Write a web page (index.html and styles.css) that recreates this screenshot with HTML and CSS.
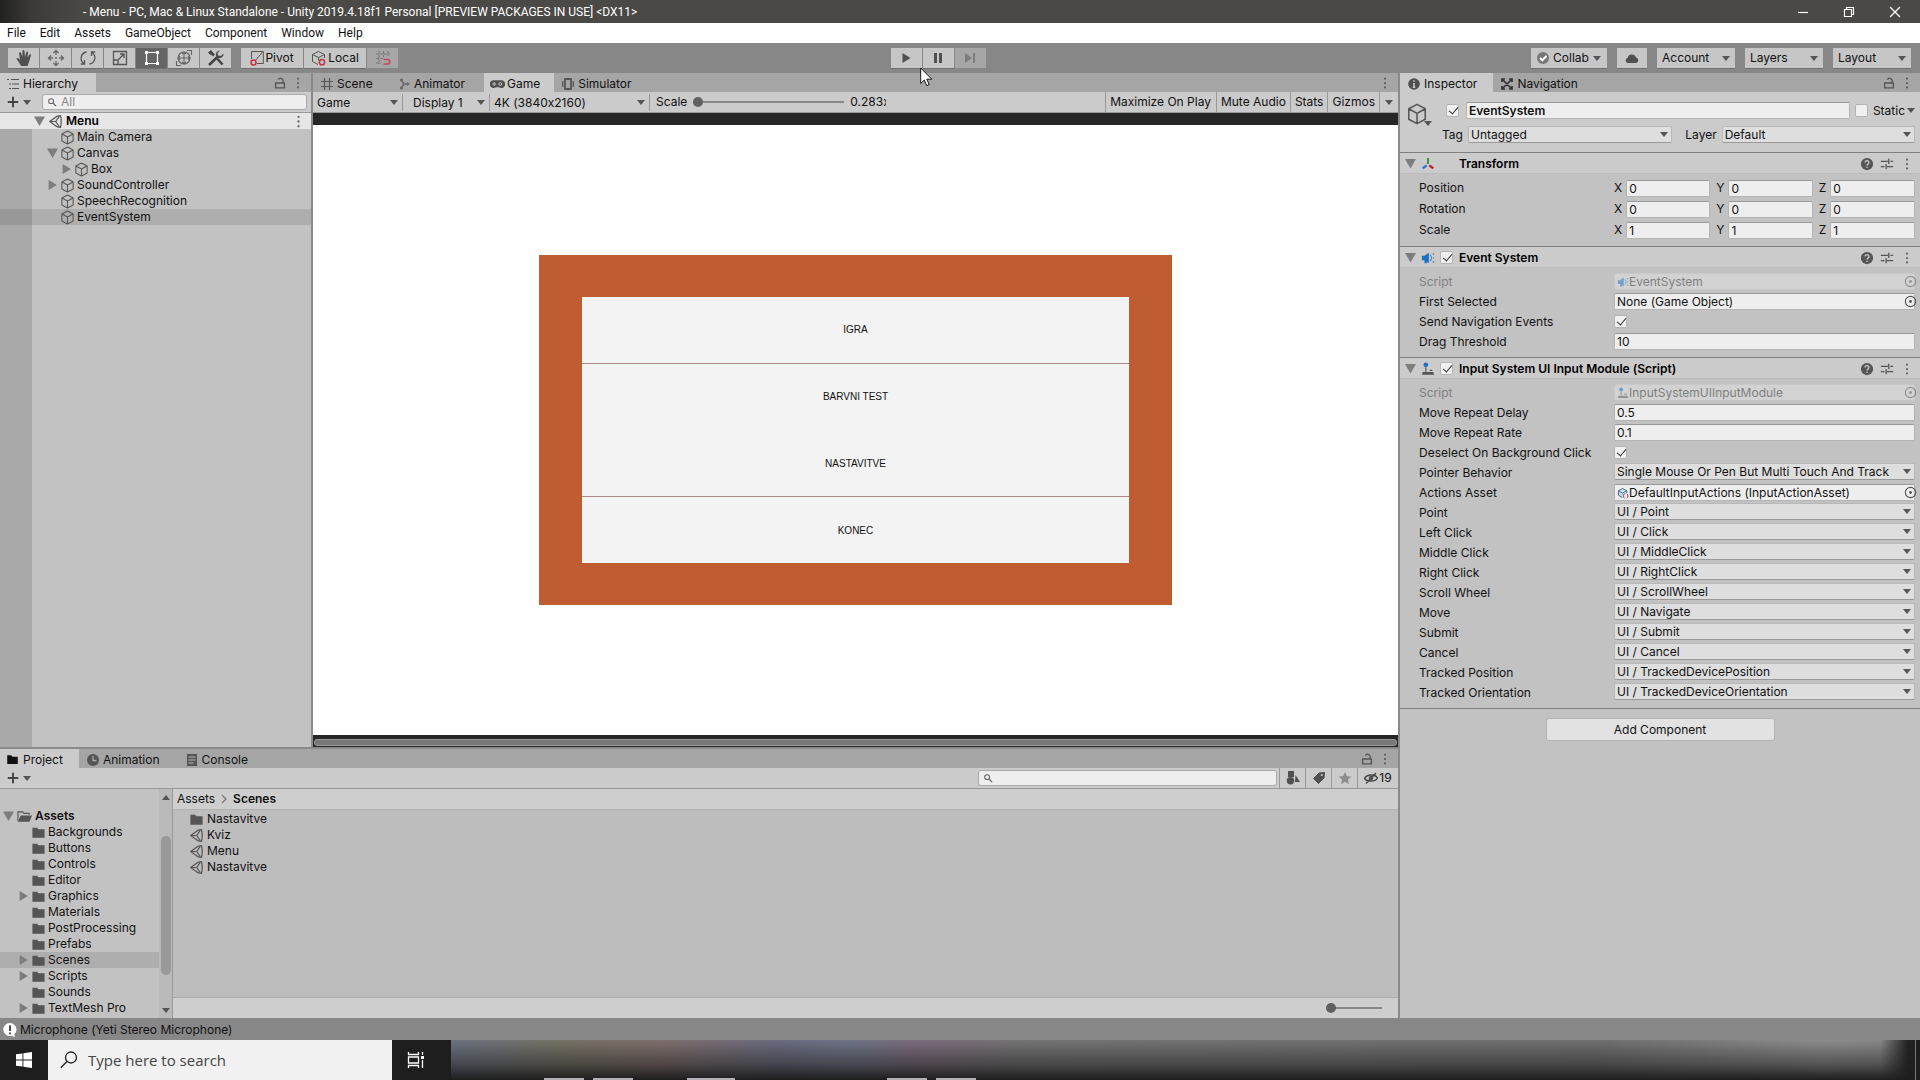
FILE: index.html
```
<!DOCTYPE html>
<html lang="en">
<head>
  <meta charset="UTF-8" />
  <meta name="viewport" content="width=device-width, initial-scale=1.0"/>
  <title>Menu - PC, Mac &amp; Linux Standalone - Unity</title>
  <link rel="stylesheet" href="styles.css">
</head>
<body>

  <!-- Shared icons -->
  <svg class="sprite" width="0" height="0" aria-hidden="true">
    <symbol id="i-cube" viewBox="0 0 16 16"><path d="M8 1l6 3.200v7.600L8 15l-6-3.200V4.200zM2 4.200l6 3.300 6-3.300M8 7.500V15" fill="none" stroke="currentColor" stroke-width="1.1" stroke-linejoin="round"/></symbol>
    <symbol id="i-unity" viewBox="0 0 16 16"><path d="M10 2.2L1.8 8 10 13.8M10 2.2l3.200-.6.8 3.400M10 13.8l3.200.6.8-3.400M14 5v6M1.800 8h6.400M8.200 8L12 2.600M8.200 8l3.800 5.400" fill="none" stroke="currentColor" stroke-width="1.3" stroke-linejoin="round"/></symbol>
    <symbol id="i-folder" viewBox="0 0 16 16"><path d="M1.5 2.8h5l1.400 1.800h6.600v8.900h-13z" fill="currentColor"/></symbol>
    <symbol id="i-open" viewBox="0 0 16 16"><path d="M1 13V3h5l1.300 1.600H13V6" fill="none" stroke="currentColor" stroke-width="1.2"/><path d="M3.800 6.800H16L13.400 13.500H1z" fill="currentColor"/></symbol>
    <symbol id="i-lock" viewBox="0 0 16 16"><path d="M3 8h10v5.500H3zM11.500 8V5a3 3 0 0 0-5.500-1" fill="none" stroke="currentColor" stroke-width="1.5"/></symbol>
    <symbol id="i-dots" viewBox="0 0 16 16"><path d="M7 2h2v2H7zM7 7h2v2H7zM7 12h2v2H7z" fill="currentColor"/></symbol>
    <symbol id="i-search" viewBox="0 0 16 16"><circle cx="6" cy="6" r="3.6" fill="none" stroke="currentColor" stroke-width="1.5"/><path d="M8.700 8.700l4.500 4.500" stroke="currentColor" stroke-width="1.8"/></symbol>
    <symbol id="i-plus" viewBox="0 0 16 16"><path d="M8 2v12M2 8h12" stroke="currentColor" stroke-width="2.2"/></symbol>
    <symbol id="i-help" viewBox="0 0 16 16"><circle cx="8" cy="8" r="7" fill="currentColor"/><path d="M5.800 6.300a2.200 2.200 0 1 1 3.300 1.900c-.8.5-1.100.8-1.100 1.600M8 11v1.700" fill="none" stroke="#cbcbcb" stroke-width="1.5"/></symbol>
    <symbol id="i-preset" viewBox="0 0 16 16"><path d="M1 5h8M12 5h3M10 2v6M1 11h4M8 11h7M7 8v6" fill="none" stroke="currentColor" stroke-width="1.5"/></symbol>
    <symbol id="i-pick" viewBox="0 0 16 16"><circle cx="8" cy="8" r="5.500" fill="none" stroke="currentColor" stroke-width="1.2"/><circle cx="8" cy="8" r="1.500" fill="currentColor"/></symbol>
    <symbol id="i-horn" viewBox="0 0 16 16"><path d="M1 5.500h3L9 2v12l-5-3.500H1z" fill="#1c6fc4"/><path d="M4 10.500h2.500V14H4z" fill="#1c6fc4"/><path d="M10.500 4.500a5 5 0 0 1 0 7" fill="none" stroke="#3a8bd8" stroke-width="1.4"/><path d="M13.500 3.500h1.500M13.500 8h1.500M13.500 12.500h1.500" stroke="#666" stroke-width="1.4"/></symbol>
    <symbol id="i-stick" viewBox="0 0 16 16"><circle cx="5.500" cy="3.200" r="2.700" fill="#1c6fc4"/><path d="M5.500 6v5M10 9.500h3" stroke="#555" stroke-width="1.4"/><path d="M2 11.500h12l1 3H1z" fill="#555"/></symbol>
  </svg>

  <header class="titlebar">
    <div class="title-icon"></div>
    <span class="title-text">- Menu - PC, Mac &amp; Linux Standalone - Unity 2019.4.18f1 Personal [PREVIEW PACKAGES IN USE] &lt;DX11&gt;</span>
    <div class="window-buttons">
      <button aria-label="Minimize"><svg width="12" height="12" viewBox="0 0 12 12"><path d="M1 6.500h10" stroke="#fff" stroke-width="1.2"/></svg></button>
      <button aria-label="Restore"><svg width="12" height="12" viewBox="0 0 12 12"><path d="M1.500 3.500h7v7h-7zM3.500 3.500v-2h7v7h-2" fill="none" stroke="#fff" stroke-width="1.2"/></svg></button>
      <button aria-label="Close"><svg width="12" height="12" viewBox="0 0 12 12"><path d="M1 1l10 10M11 1L1 11" stroke="#fff" stroke-width="1.3"/></svg></button>
    </div>
  </header>

  <nav class="menubar">
    <button>File</button><button>Edit</button><button>Assets</button><button>GameObject</button><button>Component</button><button>Window</button><button>Help</button>
  </nav>

  <div class="toolbar">
    <div class="tools">
      <div class="group">
        <button class="tool" aria-label="Hand"><svg width="18" height="18" viewBox="0 0 18 18"><path d="M6 17C5 14 2 11.500 1.500 9.500c1-1 2.300 0 3.500 1.500L4 4c.8-1 1.800-.8 2.200.2L7.300 8 7.500 2c.5-1.200 1.700-1.200 2 0L10 8l1.300-5c.7-.9 1.700-.6 1.800.4L12.500 8.500 14.500 5.500c.9-.5 1.600 0 1.400 1L14 13l-1.500 4z" fill="#505050"/></svg></button>
        <button class="tool" aria-label="Move"><svg width="18" height="18" viewBox="0 0 18 18"><path d="M9 1.500V6M9 12v4.500M1.500 9H6M12 9h4.500M6.500 4L9 1.500 11.500 4M6.500 14L9 16.500l2.500-2.500M4 6.500L1.500 9 4 11.500M14 6.500L16.500 9 14 11.500" fill="none" stroke="#6a6a6a" stroke-width="1.300"/><circle cx="9" cy="9" r="1" fill="#6a6a6a"/></svg></button>
        <button class="tool" aria-label="Rotate"><svg width="18" height="18" viewBox="0 0 18 18"><path d="M7.500 3A6.300 6.300 0 0 0 5 14.500M1.800 15h3.700v-4M10.500 15A6.300 6.300 0 0 0 13 3.500M16.200 3h-3.700v4" fill="none" stroke="#555" stroke-width="1.300"/></svg></button>
        <button class="tool" aria-label="Scale"><svg width="18" height="18" viewBox="0 0 18 18"><path d="M2.500 2.500h13v13h-13zM2.500 11h4.500v4.500M7.500 10.500L13 5M9 5h4v4" fill="none" stroke="#555" stroke-width="1.300"/></svg></button>
        <button class="tool active" aria-label="Rect"><svg width="18" height="18" viewBox="0 0 18 18"><path d="M5 3.500h8M5 14.500h8M3.500 5v8M14.500 5v8" stroke="#fff" stroke-width="1.200"/><path d="M2 2h3v3H2zM13 2h3v3h-3zM2 13h3v3H2zM13 13h3v3h-3z" fill="#fff"/></svg></button>
        <button class="tool" aria-label="Transform"><svg width="18" height="18" viewBox="0 0 18 18"><circle cx="9" cy="9" r="6" fill="none" stroke="#666" stroke-width="1.100"/><path d="M9 3v12M3 9h12M7 5l2-2 2 2M7 13l2 2 2-2M5 7L3 9l2 2M13 7l2 2-2 2M12 1.500h4.500V6M6 16.500H1.500V12" fill="none" stroke="#666" stroke-width="1.100"/></svg></button>
        <button class="tool" aria-label="Custom tools"><svg width="18" height="18" viewBox="0 0 18 18"><path d="M2 16L11 7.500M3 2.500l4 4M10.500 10l5 5.500" stroke="#444" stroke-width="2.600"/><path d="M16.500 4.500L14 7l-3-.5L10.500 4 13 1.500a4 4 0 0 0-4 5l2.500 2.500a4 4 0 0 0 5-4.500z" fill="#444"/><path d="M1 3.500L4 1l2 3-2.500 2z" fill="#444"/></svg></button>
      </div>
      <div class="group">
        <button class="wide-tool"><svg width="14" height="16" viewBox="0 0 14 16"><path d="M1.500 9V1.500h11.800v12H7M5 11L12.500 2" fill="none" stroke="#555"/><circle cx="3.500" cy="12.500" r="2.500" fill="none" stroke="#c8304a" stroke-width="1.500"/></svg>Pivot</button>
        <button class="wide-tool"><svg width="16" height="16" viewBox="0 0 16 16"><path d="M7 14.500l-5.500-3v-7L7.500 1.500l6 3V8M1.500 4.500l6 3 6-3M7.500 7.500v3" fill="none" stroke="#555"/><circle cx="11" cy="12.200" r="2.600" fill="none" stroke="#c8304a" stroke-width="1.500"/></svg>Local</button>
        <button class="tool snap" aria-label="Grid snapping" disabled><svg width="18" height="18" viewBox="0 0 18 18"><path d="M5 2v13M9.500 2v6M14 2v5M2 5h14M2 9.500h8M2 14h5" stroke="#777" stroke-dasharray="3 1"/><path d="M9.500 10.500h4a2.200 2.200 0 0 1 0 4.500h-4" fill="none" stroke="#c04a5c" stroke-width="1.700"/></svg></button>
      </div>
    </div>
    <div class="group play">
      <button class="tool" aria-label="Play"><svg width="12" height="12" viewBox="0 0 12 12"><path d="M2.500 1l8 5-8 5z" fill="#505050"/></svg></button>
      <button class="tool" aria-label="Pause"><svg width="12" height="12" viewBox="0 0 12 12"><path d="M2 1h3v10H2zM7 1h3v10H7z" fill="#505050"/></svg></button>
      <button class="tool step" aria-label="Step" disabled><svg width="12" height="12" viewBox="0 0 12 12"><path d="M1 1l7 5-7 5zM9 1h2v10H9z" fill="#7c7c7c"/></svg></button>
    </div>
    <div class="services">
      <button class="service"><svg width="12" height="12" viewBox="0 0 12 12"><circle cx="6" cy="6" r="6" fill="#777"/><path d="M3 6l2.300 2.300L9.500 4" fill="none" stroke="#fff" stroke-width="2"/></svg>Collab<i class="arrow"></i></button>
      <button class="service cloud" aria-label="Services"><svg width="14" height="12" viewBox="0 0 14 12"><path d="M3 11a2.700 2.700 0 0 1-.3-5.300A4.300 4.300 0 0 1 11 5.500 2.800 2.800 0 0 1 11 11z" fill="#505050"/></svg></button>
      <button class="service menu">Account<i class="arrow"></i></button>
      <button class="service menu">Layers<i class="arrow"></i></button>
      <button class="service menu">Layout<i class="arrow"></i></button>
    </div>
  </div>

  <main class="editor">
    <div class="left">
      <div class="upper">

        <!-- Hierarchy -->
        <section class="panel hierarchy">
          <div class="tabs">
            <button class="tab on"><svg width="12" height="12" viewBox="0 0 12 12"><path d="M0 1.500h2M4 1.500h8M2 6h2M5 6h7M2 10.500h2M5 10.500h7" stroke="#555" stroke-width="1.200"/></svg>Hierarchy</button>
            <span class="tab-tools"><button class="icon" aria-label="Lock"><svg><use href="#i-lock"/></svg></button><button class="icon" aria-label="More"><svg><use href="#i-dots"/></svg></button></span>
          </div>
          <div class="bar">
            <button class="add" aria-label="Create"><svg><use href="#i-plus"/></svg><i class="arrow"></i></button>
            <label class="search"><svg><use href="#i-search"/></svg><input type="text" placeholder="All" aria-label="Search hierarchy"></label>
          </div>
          <ul class="tree objects">
            <li class="scene"><i class="fold open"></i><svg><use href="#i-unity"/></svg>Menu<button class="icon" aria-label="Scene menu"><svg><use href="#i-dots"/></svg></button></li>
            <li><i class="fold none"></i><svg><use href="#i-cube"/></svg>Main Camera</li>
            <li><i class="fold open"></i><svg><use href="#i-cube"/></svg>Canvas</li>
            <li class="child"><i class="fold"></i><svg><use href="#i-cube"/></svg>Box</li>
            <li><i class="fold"></i><svg><use href="#i-cube"/></svg>SoundController</li>
            <li><i class="fold none"></i><svg><use href="#i-cube"/></svg>SpeechRecognition</li>
            <li class="selected"><i class="fold none"></i><svg><use href="#i-cube"/></svg>EventSystem</li>
          </ul>
        </section>

        <!-- Game view -->
        <section class="panel game">
          <div class="tabs">
            <button class="tab scene-tab"><svg width="12" height="12" viewBox="0 0 12 12"><path d="M3.500 0v12M8.500 0v12M0 3.500h12M0 8.500h12" stroke="#555" stroke-width="1.200"/></svg>Scene</button>
            <button class="tab animator-tab"><svg width="10" height="12" viewBox="0 0 10 12"><path d="M1 1.500l3 4.500-3 4.500M4 6h5" fill="none" stroke="#666" stroke-width="1.400"/><circle cx="1.500" cy="2" r="1.500" fill="#666"/><circle cx="1.500" cy="10" r="1.500" fill="#666"/><path d="M7 4l3 2-3 2z" fill="#666"/></svg>Animator</button>
            <button class="tab game-tab on"><svg width="15" height="12" viewBox="0 0 16 12"><path d="M4.500 2h7a4.200 4.200 0 1 1-2 7.500h-3A4.200 4.200 0 1 1 4.500 2z" fill="#505050"/><path d="M4.500 4v4M2.500 6h4" stroke="#cbcbcb"/><circle cx="11" cy="6" r="1.500" fill="none" stroke="#cbcbcb"/></svg>Game</button>
            <button class="tab"><svg width="12" height="12" viewBox="0 0 12 12"><path d="M3 1h6v10H3z" fill="none" stroke="#555" stroke-width="1.800"/><path d="M.7 3v6M11.300 3v6" stroke="#555" stroke-width="1.300"/></svg>Simulator</button>
            <span class="tab-tools"><button class="icon" aria-label="More"><svg><use href="#i-dots"/></svg></button></span>
          </div>
          <div class="bar view-bar">
            <span class="select flat target"><select aria-label="View"><option>Game</option></select></span>
            <span class="select flat display"><select aria-label="Display"><option>Display 1</option></select></span>
            <span class="select flat resolution"><select aria-label="Resolution"><option>4K (3840x2160)</option></select></span>
            <label for="scale">Scale</label>
            <input class="slider" id="scale" type="range" min="0" max="100" value="0">
            <span class="scale-value">0.283x</span>
            <button class="toggle first">Maximize On Play</button>
            <button class="toggle">Mute Audio</button>
            <button class="toggle">Stats</button>
            <button class="toggle">Gizmos</button>
            <button class="toggle more" aria-label="Gizmo options"><i class="arrow"></i></button>
          </div>
          <div class="stage">
            <div class="canvas">
              <div class="box">
                <button>IGRA</button>
                <button>BARVNI TEST</button>
                <button>NASTAVITVE</button>
                <button>KONEC</button>
              </div>
            </div>
            <div class="hscroll"></div>
          </div>
        </section>
      </div>

      <!-- Project -->
      <section class="panel project">
        <div class="tabs">
          <button class="tab on"><svg width="13" height="13"><use href="#i-folder"/></svg>Project</button>
          <button class="tab"><svg width="12" height="12" viewBox="0 0 12 12"><circle cx="6" cy="6" r="6" fill="#555"/><path d="M6 2v4.500h3.500" fill="none" stroke="#aaa" stroke-width="1.300"/></svg>Animation</button>
          <button class="tab"><svg width="12" height="12" viewBox="0 0 12 12"><path d="M1 0h10v12H1z" fill="#555"/><path d="M2.500 3h7M2.500 6h7M2.500 9h5" stroke="#bbb"/></svg>Console</button>
          <span class="tab-tools"><button class="icon" aria-label="Lock"><svg><use href="#i-lock"/></svg></button><button class="icon" aria-label="More"><svg><use href="#i-dots"/></svg></button></span>
        </div>
        <div class="bar project-bar">
          <button class="add" aria-label="Create"><svg><use href="#i-plus"/></svg><i class="arrow"></i></button>
          <label class="search"><svg><use href="#i-search"/></svg><input type="text" aria-label="Search project"></label>
          <button class="filter" aria-label="Search by type"><svg width="14" height="14" viewBox="0 0 14 14"><path d="M2 0h6v6H2zM9.500 4l4.500 7H9z" fill="#505050"/><circle cx="4.500" cy="9.800" r="3.700" fill="#505050"/></svg></button>
          <button class="filter" aria-label="Search by label"><svg width="14" height="14" viewBox="0 0 14 14"><path d="M1.500 7.500L7 2l5.500-.5L12 7l-5.500 5.500z" fill="#505050" stroke="#505050" stroke-linejoin="round"/><circle cx="9.800" cy="4" r="1.100" fill="#cbcbcb"/></svg></button>
          <button class="filter" aria-label="Save search"><svg width="14" height="14" viewBox="0 0 14 14"><path d="M7 1l1.800 4.200 4.500.4-3.400 3 1 4.400L7 10.700 3.100 13l1-4.400-3.400-3 4.500-.4z" fill="#8c8c8c"/></svg></button>
          <button class="filter hidden-count"><svg width="14" height="14" viewBox="0 0 14 14"><path d="M.5 7.500C3 3 11 3 13.500 7 11 11 3 11 .5 7.500zM2 12.500L12 2" fill="none" stroke="#444" stroke-width="1.400"/><circle cx="7" cy="7" r="2.300" fill="#505050"/></svg>19</button>
        </div>
        <div class="browser">
          <div class="folders">
            <ul class="tree">
              <li class="root"><i class="fold open"></i><svg><use href="#i-open"/></svg>Assets</li>
              <li><i class="fold none"></i><svg><use href="#i-folder"/></svg>Backgrounds</li>
              <li><i class="fold none"></i><svg><use href="#i-folder"/></svg>Buttons</li>
              <li><i class="fold none"></i><svg><use href="#i-folder"/></svg>Controls</li>
              <li><i class="fold none"></i><svg><use href="#i-folder"/></svg>Editor</li>
              <li><i class="fold"></i><svg><use href="#i-folder"/></svg>Graphics</li>
              <li><i class="fold none"></i><svg><use href="#i-folder"/></svg>Materials</li>
              <li><i class="fold none"></i><svg><use href="#i-folder"/></svg>PostProcessing</li>
              <li><i class="fold none"></i><svg><use href="#i-folder"/></svg>Prefabs</li>
              <li class="selected"><i class="fold"></i><svg><use href="#i-folder"/></svg>Scenes</li>
              <li><i class="fold"></i><svg><use href="#i-folder"/></svg>Scripts</li>
              <li><i class="fold none"></i><svg><use href="#i-folder"/></svg>Sounds</li>
              <li><i class="fold"></i><svg><use href="#i-folder"/></svg>TextMesh Pro</li>
            </ul>
            <div class="vscroll"><i class="arrow up"></i><div class="thumb"></div><i class="arrow"></i></div>
          </div>
          <div class="files">
            <div class="crumbs"><a href="#">Assets</a><svg width="6" height="10" viewBox="0 0 6 10"><path d="M1 1l4 4-4 4" fill="none" stroke="#777" stroke-width="1.300"/></svg><b>Scenes</b></div>
            <ul class="tree">
              <li><svg><use href="#i-folder"/></svg>Nastavitve</li>
              <li><svg><use href="#i-unity"/></svg>Kviz</li>
              <li><svg><use href="#i-unity"/></svg>Menu</li>
              <li><svg><use href="#i-unity"/></svg>Nastavitve</li>
            </ul>
            <div class="files-foot"><input class="slider" type="range" min="0" max="100" value="0" aria-label="Icon size"></div>
          </div>
        </div>
      </section>
    </div>

    <!-- Inspector -->
    <section class="panel inspector">
      <div class="tabs">
        <button class="tab on"><svg width="12" height="12" viewBox="0 0 12 12"><circle cx="6" cy="6" r="5.800" fill="#505050"/><path d="M6 2.200v1.600M6 5v4.500M4.800 9.300h2.400" stroke="#cbcbcb" stroke-width="1.500"/></svg>Inspector</button>
        <button class="tab"><svg width="12" height="12" viewBox="0 0 12 12"><path d="M1 1l10 10M11 1L1 11M1 4V1h3M8 1h3v3M11 8v3H8M4 11H1V8" fill="none" stroke="#333" stroke-width="1.700"/></svg>Navigation</button>
        <span class="tab-tools"><button class="icon" aria-label="Lock"><svg><use href="#i-lock"/></svg></button><button class="icon" aria-label="More"><svg><use href="#i-dots"/></svg></button></span>
      </div>

      <div class="object-head">
        <button class="object-icon" aria-label="Object icon"><svg><use href="#i-cube"/></svg><i class="arrow"></i></button>
        <div class="object-rows">
          <div class="object-row">
            <input type="checkbox" checked aria-label="Active">
            <input class="text name" type="text" value="EventSystem" aria-label="Name">
            <input id="static" type="checkbox"><label for="static">Static</label><i class="arrow"></i>
          </div>
          <div class="object-row tags">
            <label for="tag">Tag</label><span class="select tag"><select id="tag"><option>Untagged</option></select></span>
            <label for="layer">Layer</label><span class="select layer"><select id="layer"><option>Default</option></select></span>
          </div>
        </div>
      </div>

      <section class="component">
        <h2><i class="fold open"></i><svg class="kind" viewBox="0 0 16 16"><path d="M8 1v7" stroke="#3b8f3b" stroke-width="2.200"/><path d="M6.500 9.500L2 13" stroke="#2a6fc9" stroke-width="2.600"/><path d="M9.500 9.500L14 13" stroke="#b3202c" stroke-width="2.600"/></svg><span class="no-check"></span>Transform<span class="head-tools"><svg><use href="#i-help"/></svg><svg><use href="#i-preset"/></svg><svg><use href="#i-dots"/></svg></span></h2>
        <div class="row vector"><span class="label">Position</span>
          <div class="axes"><label>X<input class="text" type="text" value="0"></label><label>Y<input class="text" type="text" value="0"></label><label>Z<input class="text" type="text" value="0"></label></div></div>
        <div class="row vector"><span class="label">Rotation</span>
          <div class="axes"><label>X<input class="text" type="text" value="0"></label><label>Y<input class="text" type="text" value="0"></label><label>Z<input class="text" type="text" value="0"></label></div></div>
        <div class="row vector"><span class="label">Scale</span>
          <div class="axes"><label>X<input class="text" type="text" value="1"></label><label>Y<input class="text" type="text" value="1"></label><label>Z<input class="text" type="text" value="1"></label></div></div>
      </section>

      <section class="component">
        <h2><i class="fold open"></i><svg class="kind"><use href="#i-horn"/></svg><input type="checkbox" checked aria-label="Enable Event System">Event System<span class="head-tools"><svg><use href="#i-help"/></svg><svg><use href="#i-preset"/></svg><svg><use href="#i-dots"/></svg></span></h2>
        <div class="row off"><label class="label" for="es-script">Script</label><div class="object-field"><svg><use href="#i-horn"/></svg><input id="es-script" type="text" value="EventSystem" disabled><svg class="pick"><use href="#i-pick"/></svg></div></div>
        <div class="row"><label class="label" for="first">First Selected</label><div class="object-field"><input id="first" type="text" value="None (Game Object)"><svg class="pick"><use href="#i-pick"/></svg></div></div>
        <div class="row"><label class="label" for="send">Send Navigation Events</label><input id="send" type="checkbox" checked></div>
        <div class="row"><label class="label" for="drag">Drag Threshold</label><input class="text" id="drag" type="text" value="10"></div>
      </section>

      <section class="component">
        <h2><i class="fold open"></i><svg class="kind"><use href="#i-stick"/></svg><input type="checkbox" checked aria-label="Enable Input System UI Input Module">Input System UI Input Module (Script)<span class="head-tools"><svg><use href="#i-help"/></svg><svg><use href="#i-preset"/></svg><svg><use href="#i-dots"/></svg></span></h2>
        <div class="row off"><label class="label" for="is-script">Script</label><div class="object-field"><svg><use href="#i-stick"/></svg><input id="is-script" type="text" value="InputSystemUIInputModule" disabled><svg class="pick"><use href="#i-pick"/></svg></div></div>
        <div class="row"><label class="label" for="delay">Move Repeat Delay</label><input class="text" id="delay" type="text" value="0.5"></div>
        <div class="row"><label class="label" for="rate">Move Repeat Rate</label><input class="text" id="rate" type="text" value="0.1"></div>
        <div class="row"><label class="label" for="deselect">Deselect On Background Click</label><input id="deselect" type="checkbox" checked></div>
        <div class="row"><label class="label" for="pointer">Pointer Behavior</label><span class="select"><select id="pointer"><option>Single Mouse Or Pen But Multi Touch And Track</option></select></span></div>
        <div class="row"><label class="label" for="actions">Actions Asset</label><div class="object-field"><svg viewBox="0 0 16 16"><path d="M7 14l-5-3V5l5.500-3L13 5v3M2 5l5.500 3L13 5" fill="#c6d8ea" stroke="#3a6ea8" stroke-width="1.300"/><path d="M10 9c-1.500 0-.5 3-2 3 1.500 0 .5 3 2 3M13 9c1.500 0 .5 3 2 3-1.500 0-.5 3-2 3" fill="none" stroke="#c8304a" stroke-width="1.300"/></svg><input id="actions" type="text" value="DefaultInputActions (InputActionAsset)"><svg class="pick"><use href="#i-pick"/></svg></div></div>
        <div class="row"><label class="label" for="point">Point</label><span class="select"><select id="point"><option>UI / Point</option></select></span></div>
        <div class="row"><label class="label" for="left">Left Click</label><span class="select"><select id="left"><option>UI / Click</option></select></span></div>
        <div class="row"><label class="label" for="middle">Middle Click</label><span class="select"><select id="middle"><option>UI / MiddleClick</option></select></span></div>
        <div class="row"><label class="label" for="right">Right Click</label><span class="select"><select id="right"><option>UI / RightClick</option></select></span></div>
        <div class="row"><label class="label" for="wheel">Scroll Wheel</label><span class="select"><select id="wheel"><option>UI / ScrollWheel</option></select></span></div>
        <div class="row"><label class="label" for="move">Move</label><span class="select"><select id="move"><option>UI / Navigate</option></select></span></div>
        <div class="row"><label class="label" for="submit">Submit</label><span class="select"><select id="submit"><option>UI / Submit</option></select></span></div>
        <div class="row"><label class="label" for="cancel">Cancel</label><span class="select"><select id="cancel"><option>UI / Cancel</option></select></span></div>
        <div class="row"><label class="label" for="tpos">Tracked Position</label><span class="select"><select id="tpos"><option>UI / TrackedDevicePosition</option></select></span></div>
        <div class="row"><label class="label" for="trot">Tracked Orientation</label><span class="select"><select id="trot"><option>UI / TrackedDeviceOrientation</option></select></span></div>
      </section>

      <div class="add-component"><button>Add Component</button></div>
    </section>
  </main>

  <div class="status">
    <svg width="16" height="16" viewBox="0 0 16 16"><path d="M8 1a6.500 6.500 0 0 1 6.500 6.500c0 2-.9 3.500-2.200 4.700l.7 3-3.300-1.500A6.500 6.500 0 1 1 8 1z" fill="#fff"/><path d="M8 3.500V9M8 10.500v1.800" stroke="#333" stroke-width="1.800"/></svg>
    Microphone (Yeti Stereo Microphone)
  </div>

  <footer class="taskbar">
    <button class="start" aria-label="Start"><svg width="16" height="16" viewBox="0 0 16 16"><path d="M0 2.300L6.500 1.400v6.100H0zM7.400 1.300L16 0v7.500H7.400zM0 8.400h6.500v6.200L0 13.700zM7.400 8.400H16V16l-8.600-1.200z" fill="#fff"/></svg></button>
    <label class="taskbar-search"><svg width="18" height="18" viewBox="0 0 18 18"><circle cx="11" cy="6.500" r="5.500" fill="none" stroke="#222" stroke-width="1.300"/><path d="M7 10.500L.8 16.700" stroke="#222" stroke-width="1.400"/></svg><input type="text" placeholder="Type here to search" aria-label="Search"></label>
    <button class="task-view" aria-label="Task view"><svg width="18" height="18" viewBox="0 0 18 18"><path d="M1.500 1v2.500h10V1M1.500 6h10v6h-10zM1.500 17v-2.500h10V17M15.500 1v3M15.500 9v8" fill="none" stroke="#fff" stroke-width="1.300"/><path d="M14 5h3v3h-3z" fill="#fff"/></svg></button>
    <div class="running"><i></i><i></i><i></i><i></i><i></i></div>
    <button class="show-desktop" aria-label="Show desktop"></button>
  </footer>

  <svg class="pointer" width="13" height="20" viewBox="0 0 13 20" aria-hidden="true"><path d="M.7 1v15.500l3.600-3.400 2.400 5.500 2.500-1.100-2.400-5.300h5z" fill="#fff" stroke="#000" stroke-width=".9"/></svg>

</body>
</html>
```
FILE: styles.css
```
* { box-sizing: border-box; }
body {
  margin: 0; height: 100vh; overflow: hidden;
  display: flex; flex-direction: column;
  background: #8a8a8a; color: #111;
  font: 12px/16px Inter, "Liberation Sans", sans-serif;
  font-feature-settings: "calt" 0;
}
button, input, select { font: inherit; font-feature-settings: inherit; color: inherit; margin: 0; }
button {
  display: flex; align-items: center; justify-content: center;
  padding: 0; border: none; background: none;
}
ul { list-style: none; margin: 0; padding: 0; }
svg { flex: none; }
.sprite { position: absolute; }

/* small shared bits */
.arrow {
  flex: none; width: 0; height: 0;
  border: 4px solid transparent; border-top: 5px solid #555; border-bottom: 0;
}
.arrow.up { border-top: 0; border-bottom: 5px solid #555; }
.icon svg { width: 14px; height: 14px; color: #555; }
.fold {
  flex: none; width: 11px; height: 10px; background: #7d7d7d;
  clip-path: polygon(15% 0, 90% 50%, 15% 100%);
}
.fold.open { clip-path: polygon(0 5%, 100% 5%, 50% 100%); }
.fold.none { visibility: hidden; }

/* title bar */
.titlebar { flex: none; height: 23px; display: flex; align-items: center; background: #4a4946; color: #fff; }
.title-icon { width: 83px; height: 23px; background: linear-gradient(to right, #222, #3c3b39 40%, #4a4946); }
.title-text { font: 12px/16px Roboto, sans-serif; white-space: nowrap; }
.window-buttons { margin-left: auto; display: flex; }
.window-buttons button { width: 46px; height: 20px; }
.window-buttons button:last-child { margin-right: 2px; }

.menubar {
  flex: none; height: 20px; padding-left: 7px; display: flex; gap: 14px;
  background: #fff; font: 12px/20px Roboto, sans-serif;
}

/* toolbar */
.toolbar {
  flex: none; height: 30px; padding: 0 9px 0 8px; background: #878787;
  display: grid; grid-template-columns: calc(50% - 69px) auto 1fr; align-items: center;
}
.tools { display: flex; gap: 10px; }
.group { display: flex; gap: 1px; }
.tool, .wide-tool, .service { height: 20px; background: #c6c6c6; box-shadow: 0 1px #6f6f6f; }
.tool { width: 31px; }
.tool.active { background: #656565; }
.tool.snap, .tool.step { background: #a6a6a6; box-shadow: none; }
.wide-tool { width: 62px; gap: 1px; }
.services { display: flex; justify-content: flex-end; gap: 10px; }
.service { width: 76px; gap: 4px; }
.service.cloud { width: 30px; }
.service.menu { width: 78px; justify-content: space-between; padding: 0 5px; }

/* docked panels */
.editor { flex: 1; min-height: 0; display: grid; grid-template-columns: 1fr 520px; gap: 2px; }
.left { min-width: 0; min-height: 0; display: flex; flex-direction: column; gap: 2px; }
.upper { flex: 1; min-height: 0; display: grid; grid-template-columns: 311px 1fr; gap: 2px; }
.panel { min-width: 0; display: flex; flex-direction: column; background: #c2c2c2; }
.tabs { flex: none; height: 19px; display: flex; background: #a5a5a5; }
.tab { justify-content: flex-start; padding: 2px 16px 0 8px; gap: 4px; }
.tab.on { background: #cbcbcb; }
.project .tab { padding-right: 18px; }
.project .tab.on { padding: 2px 16px 0 6px; }
.hierarchy .tab { padding: 2px 18px 0 7px; }
.scene-tab { width: 79px; }
.animator-tab { width: 92px; }
.game-tab { padding: 2px 14px 0 6px; gap: 2px; }
.tab-tools { margin-left: auto; padding-right: 6px; display: flex; align-items: center; gap: 4px; }
.bar {
  flex: none; height: 21px; display: flex; align-items: center;
  background: #cbcbcb; border-bottom: 1px solid #999;
}
.add { width: 36px; gap: 3px; }
.add svg { width: 14px; height: 14px; color: #444; }
.search {
  flex: 1; height: 16px; margin: 0 4px 0 6px; padding-left: 4px;
  display: flex; align-items: center; gap: 3px;
  background: #eee; border: 1px solid #aaa; border-radius: 3px;
}
.search svg { width: 11px; height: 11px; color: #666; }
.search input { flex: 1; min-width: 0; border: none; background: none; padding: 0; height: 14px; }
.search input::placeholder { color: #888; opacity: 1; }

/* trees */
.tree li { display: flex; align-items: center; height: 16px; gap: 2px; white-space: nowrap; }
.tree svg { width: 15px; height: 15px; color: #555; }
.tree .selected { background: #aeaeae; }
.objects { flex: 1; background: linear-gradient(to right, #a9a9a9 32px, transparent 32px); }
.objects li { padding-left: 47px; }
.objects .child { padding-left: 61px; }
.objects .scene { padding: 0 5px 0 34px; gap: 3px; background: #e6e6e6; font-weight: 600; color: #000; }
.scene .icon { margin-left: auto; }
.objects .selected { background: linear-gradient(to right, #989898 32px, #aeaeae 32px); }

/* game view */
.view-bar .select { border-right: 1px solid #999; }
.select.target { width: 90px; }
.select.display { width: 87px; padding-left: 6px; }
.select.resolution { width: 160px; margin-right: 6px; }
.slider { appearance: none; width: 151px; height: 12px; margin: 0 6px; padding: 0; background: none; }
.slider::-webkit-slider-runnable-track { height: 2px; background: #888; }
.slider::-webkit-slider-thumb {
  appearance: none; width: 10px; height: 10px; margin-top: -4px;
  border-radius: 50%; background: #606060;
}
.scale-value { width: 36px; overflow: hidden; }
.toggle { height: 20px; padding: 0 4px; border-left: 1px solid #999; white-space: nowrap; }
.toggle.first { margin-left: auto; padding-right: 5px; }
.toggle.more { width: 19px; }
.stage { flex: 1; min-height: 0; display: flex; flex-direction: column; background: #262626; padding-top: 12px; }
.canvas { flex: 1; display: flex; align-items: center; justify-content: center; background: #fff; }
.box {
  width: 58.3%; height: 57.4%; padding: 42px 43px;
  display: flex; flex-direction: column; background: #c05c31;
}
.box button {
  flex: 1; padding-top: 1px; background: #f3f3f3; color: #111;
  font: 10px/12px "Liberation Sans", Arial, sans-serif;
}
.box button:nth-child(2), .box button:nth-child(4) { border-top: 1px solid #a88; }
.hscroll { flex: none; height: 7px; margin: 4px 1px 1px; border: 1px solid #999; border-radius: 3px; background: #787878; }

/* project */
.project { flex: none; height: 269px; }
.project-bar .search { flex: 0 0 299px; margin: 0 2px 0 auto; }
.filter { width: 26px; height: 20px; border-left: 1px solid #999; }
.hidden-count { width: 41px; gap: 1px; }
.browser { flex: 1; min-height: 0; display: flex; }
.folders { width: 173px; display: flex; border-right: 1px solid #999; }
.folders .tree { flex: 1; padding-top: 19px; }
.folders li { padding-left: 18px; }
.folders .root { padding-left: 3px; gap: 3px; font-weight: 600; }
.vscroll {
  width: 13px; padding: 6px 0 5px;
  display: flex; flex-direction: column; align-items: center; justify-content: space-between;
  background: #bababa;
}
.thumb { width: 10px; height: 139px; margin-top: 3px; border-radius: 5px; background: #999; }
.files { flex: 1; min-width: 0; display: flex; flex-direction: column; background: #bdbdbd; }
.crumbs {
  flex: none; height: 21px; padding-left: 4px;
  display: flex; align-items: center; gap: 6px;
  background: #cecece; border-bottom: 1px solid #b2b2b2;
}
.crumbs a { color: inherit; text-decoration: none; }
.crumbs b { font-weight: 600; }
.files .tree { flex: 1; padding-top: 1px; }
.files li { padding-left: 16px; gap: 3px; }
.files-foot {
  flex: none; height: 21px; padding-right: 10px;
  display: flex; align-items: center; justify-content: flex-end;
  background: #cecece; border-top: 1px solid #aaa;
}
.files-foot .slider { width: 56px; }

/* inspector */
.inspector { min-height: 0; overflow: hidden; }
.object-head { height: 60px; padding: 10px 5px 0 6px; display: flex; gap: 18px; background: #cbcbcb; }
.object-icon { position: relative; align-self: flex-start; }
.object-icon svg { width: 22px; height: 24px; color: #555; }
.object-icon .arrow { position: absolute; right: -4px; bottom: 0; }
.object-rows { flex: 1; display: flex; flex-direction: column; gap: 7px; }
.object-row { display: flex; align-items: center; gap: 5px; }
.object-row .name { margin-left: 2px; font-weight: 600; }
.object-row .arrow { margin-left: -3px; }
.tags { margin-left: -4px; }
.select.tag { flex: 204; margin-right: 8px; }
.select.layer { flex: 193; }

input[type="checkbox"] {
  appearance: none; flex: none; width: 13px; height: 13px;
  background: #f0f0f0; border: 1px solid #b4b4b4; border-radius: 2px;
}
input[type="checkbox"]:checked::before {
  content: ""; display: block; width: 4px; height: 8px; margin: 0 0 0 4px;
  border: solid #333; border-width: 0 1px 1px 0; transform: rotate(40deg);
}
.text {
  flex: 1; min-width: 0; width: 100%; height: 17px; padding: 0 2px;
  background: #eee; border: 1px solid #b4b4b4; border-top-color: #999; border-radius: 2px;
}
.select { position: relative; flex: 1; min-width: 0; display: flex; }
.select select {
  appearance: none; width: 100%; height: 17px; padding: 0 16px 0 2px;
  background: #dedede; border: 1px solid #b8b8b8; border-bottom-color: #999; border-radius: 2px;
  line-height: 15px;
}
.select::after {
  content: ""; position: absolute; right: 4px; top: 6px; pointer-events: none;
  border: 4px solid transparent; border-top: 5px solid #555; border-bottom: 0;
}
.select.flat { flex: none; }
.select.flat select { padding-left: 3px; background: none; border-color: transparent; }
.component { border-top: 1px solid #7f7f7f; padding-bottom: 6px; }
.component h2 {
  height: 21px; margin: 0 0 3px; padding: 1px 6px 0 5px;
  display: flex; align-items: center; gap: 5px;
  background: #cbcbcb; border-bottom: 1px solid #bbb;
  font-size: 12px; font-weight: 600; color: #000;
}
.kind { width: 14px; height: 14px; }
.component h2 input, .no-check { margin-right: 1px; }
.no-check { width: 13px; }
.head-tools { margin-left: auto; display: flex; gap: 6px; }
.head-tools svg { width: 14px; height: 14px; color: #555; }
.row { height: 20px; padding: 1px 5px 0 19px; display: flex; align-items: center; }
.row .select { margin-bottom: 2px; }
.label { flex: none; width: 195px; white-space: nowrap; }
.vector { height: 21px; }
.axes { flex: 1; display: grid; grid-template-columns: 1fr 1fr 1fr; gap: 6px; }
.axes label { display: flex; align-items: center; gap: 4px; }
.object-field {
  flex: 1; min-width: 0; height: 17px; padding: 0 0 0 2px; display: flex; align-items: center;
  background: #eee; border: 1px solid #b4b4b4; border-top-color: #999; border-radius: 2px;
}
.object-field svg { width: 12px; height: 12px; color: #555; }
.object-field input { flex: 1; min-width: 0; height: 15px; padding: 0; border: none; background: none; }
.object-field .pick { width: 15px; height: 15px; margin-right: -4px; }
.off { color: #808080; }
.off .object-field { background: #d2d2d2; border-color: #c8c8c8; }
.off .object-field svg { opacity: .5; }
.add-component { border-top: 1px solid #7f7f7f; padding-top: 9px; display: flex; justify-content: center; }
.add-component button { width: 229px; height: 23px; background: #e2e2e2; border: 1px solid #b4b4b4; border-radius: 3px; }

/* status and taskbar */
.status { flex: none; height: 22px; padding: 1px 0 0 2px; display: flex; align-items: center; gap: 2px; background: #878787; }
.taskbar {
  flex: none; height: 40px; display: flex;
  background:
    linear-gradient(to bottom, transparent, rgba(30, 30, 30, .5) 60%, #1e1e1e),
    linear-gradient(to right, #6c7282 451px, #767264 565px, #806f6c 660px, #6a6c80 780px, #6f7486 850px, #7c6c7c 920px, #747474 1020px, #707070 1600px, #8c8c8c 1820px, #888 1880px, #222 1908px);
}
.start { width: 48px; background: #1e1e1e; }
.taskbar-search {
  width: 344px; padding-left: 12px; display: flex; align-items: center; gap: 10px;
  background: #f1f1f1; font: 15px/20px "Open Sans", sans-serif;
}
.taskbar-search input { flex: 1; min-width: 0; border: none; background: none; padding: 0; }
.taskbar-search input::placeholder { color: #444; opacity: 1; }
.task-view { width: 59px; padding-right: 12px; background: #1e1e1e; }
.running { flex: 1; padding-left: 93px; display: flex; align-items: flex-end; gap: 9px; }
.running i { width: 40px; height: 2px; background: #b5b0b5; }
.running i:nth-child(3) { margin-left: 45px; width: 48px; }
.running i:nth-child(4) { margin-left: 143px; }
.show-desktop { width: 5px; border-left: 1px solid #777; background: #1e1e1e; }

/* mouse pointer over the play controls */
.pointer { position: absolute; left: calc(50% - 40px); top: 67px; }
```
